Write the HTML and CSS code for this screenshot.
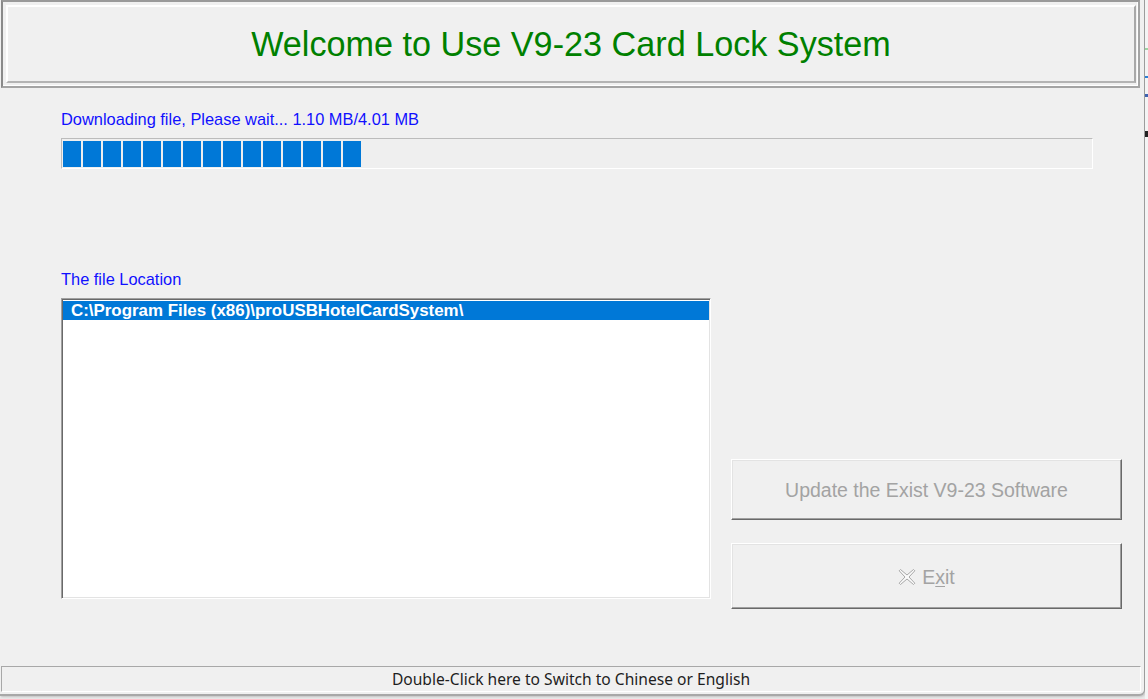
FILE: index.html
```html
<!DOCTYPE html>
<html>
<head>
<meta charset="utf-8">
<link rel="stylesheet" href="styles.css">
</head>
<body>
<div class="desk">
  <div class="window">
    <div class="header">
      <div class="header-inner">
        <h1 class="title">Welcome to Use V9-23 Card Lock System</h1>
      </div>
    </div>
    <div class="main">
      <div class="label dl-label">Downloading file, Please wait... 1.10 MB/4.01 MB</div>
      <div class="progress">
        <span class="chunk"></span><span class="chunk"></span><span class="chunk"></span><span class="chunk"></span><span class="chunk"></span>
        <span class="chunk"></span><span class="chunk"></span><span class="chunk"></span><span class="chunk"></span><span class="chunk"></span>
        <span class="chunk"></span><span class="chunk"></span><span class="chunk"></span><span class="chunk"></span><span class="chunk"></span>
      </div>
      <div class="label loc-label">The file Location</div>
      <div class="row">
        <div class="listbox">
          <div class="item selected">C:\Program Files (x86)\proUSBHotelCardSystem\</div>
        </div>
        <div class="buttons">
          <div class="btn btn-update">Update the Exist V9-23 Software</div>
          <div class="btn btn-exit">
            <svg class="x-icon" width="18" height="18" viewBox="0 0 18 18">
              <path d="M2.5 1.5 L9 7 L15.5 1.5 L16.8 2.8 L11 9 L16.8 15.2 L15.5 16.5 L9 11 L2.5 16.5 L1.2 15.2 L7 9 L1.2 2.8 Z" fill="#fafafa" stroke="#a8a8a8" stroke-width="1" stroke-linejoin="round"/>
            </svg>
            <span class="exit-text">E<u>x</u>it</span>
          </div>
        </div>
      </div>
    </div>
    <div class="status">Double-Click here to Switch to Chinese or English</div>
  </div>
  <div class="behind">
    <span class="mark m1"></span>
    <span class="mark m2"></span>
    <span class="mark m3"></span>
    <span class="mark m4"></span>
  </div>
</div>
</body>
</html>
```

FILE: styles.css
```css
html, body {
  margin: 0;
  padding: 0;
}
body {
  width: 1148px;
  height: 699px;
  overflow: hidden;
  background: #e8e8e8;
  font-family: "Liberation Sans", Arial, sans-serif;
}
.desk {
  display: flex;
  width: 1148px;
  height: 699px;
}
.window {
  box-sizing: border-box;
  width: 1145px;
  height: 696px;
  background: #f0f0f0;
  border-right: 1px solid #9c9c9c;
  border-bottom: 2px solid #a8a8a8;
  border-bottom-right-radius: 6px;
  display: flex;
  flex-direction: column;
  box-shadow: 1px 1px 2px rgba(0,0,0,0.15);
}
.behind {
  flex: 1;
  background: #f4f4f4;
  position: relative;
}
.mark {
  position: absolute;
  left: 0;
  width: 3px;
}
.m1 { top: 48px; height: 2px; background: #9fd3a3; }
.m2 { top: 76px; height: 2px; background: #2b7fd6; }
.m3 { top: 94px; height: 3px; background: #3f62b0; }
.m4 { top: 130px; height: 6px; background: #222; border-top: 1px solid #f4f4f4; }

.header {
  box-sizing: border-box;
  margin: 0 4px 0 1px;
  height: 88px;
  border: 2px solid #a4a4a4;
  border-left-color: #8a8a8a;
  border-top-color: #9a9a9a;
  box-shadow: inset -1px -1px 0 #ffffff;
  padding: 3px 2px 3px 3px;
}
.header-inner {
  box-sizing: border-box;
  height: 100%;
  border: 2px solid;
  border-color: #ffffff #a8a8a8 #b4b4b4 #ffffff;
  display: flex;
  align-items: center;
  justify-content: center;
}
.title {
  margin: 0;
  font-weight: normal;
  font-size: 34.2px;
  color: #008000;
  font-family: "Liberation Sans", Arial, sans-serif;
  padding-top: 1px;
}

.main {
  padding-left: 61px;
}
.label {
  font-size: 16.4px;
  line-height: 18px;
  height: 18px;
  color: #1010ff;
}
.dl-label { margin-top: 22px; }
.progress {
  box-sizing: border-box;
  margin-top: 10px;
  width: 1032px;
  height: 31px;
  border: 1px solid;
  border-color: #bcbcbc #ffffff #ffffff #bcbcbc;
  background: #efefef;
  padding: 2px 1px;
  display: flex;
  gap: 2px;
}
.chunk {
  width: 18px;
  height: 26px;
  background: #0078d7;
}
.loc-label { margin-top: 101px; }

.row {
  margin-top: 10px;
  display: flex;
  height: 311px;
}
.listbox {
  box-sizing: border-box;
  width: 650px;
  height: 301px;
  background: #ffffff;
  border: 1px solid;
  border-color: #a0a0a0 #ffffff #ffffff #a0a0a0;
  box-shadow: inset 1px 1px 0 #696969, inset -1px -1px 0 #e3e3e3;
  padding: 2px 1px 0 1px;
}
.item {
  height: 19px;
  line-height: 19px;
  padding-left: 8px;
  font-size: 16.9px;
  font-weight: bold;
  white-space: nowrap;
}
.selected {
  background: #0078d7;
  color: #ffffff;
}
.buttons {
  margin-left: 20px;
  width: 391px;
  display: flex;
  flex-direction: column;
  justify-content: flex-end;
  gap: 23px;
}
.btn {
  box-sizing: border-box;
  border: 1px solid;
  border-color: #ffffff #696969 #696969 #ffffff;
  box-shadow: inset -1px -1px 0 #a0a0a0, inset 1px 1px 0 #e3e3e3;
  display: flex;
  align-items: center;
  justify-content: center;
  color: #a3a3a3;
  font-size: 19.5px;
}
.btn-update {
  height: 61px;
  padding-top: 2px;
}
.btn-exit {
  height: 66px;
  gap: 6px;
  padding-top: 2px;
}
.x-icon {
  display: block;
}
.exit-text u {
  text-decoration-thickness: 1px;
  text-underline-offset: 2px;
}

.status {
  box-sizing: border-box;
  margin: 57px 3px 0 1px;
  height: 26px;
  border: 1px solid;
  border-color: #a8a8a8 #ffffff #ffffff #a8a8a8;
  font-family: "Noto Sans", "DejaVu Sans", sans-serif;
  font-size: 15.6px;
  line-height: 24px;
  text-align: center;
  color: #1e1e1e;
}
```
